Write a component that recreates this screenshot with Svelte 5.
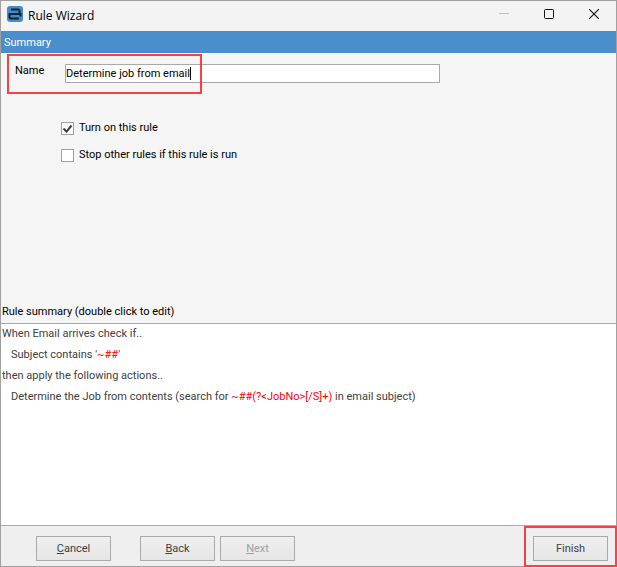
<script>
    let name = 'Determine job from email';
    let enabled = true;
    let stopOthers = false;

    const lines = [
        { parts: [{ text: 'When Email arrives check if..' }] },
        { indent: true, parts: [{ text: "Subject contains '" }, { text: '~##', value: true }, { text: "'" }] },
        { parts: [{ text: 'then apply the following actions..' }] },
        {
            indent: true,
            parts: [
                { text: 'Determine the Job from contents (search for ' },
                { text: '~##(?<JobNo>[/S]+)', value: true },
                { text: ' in email subject)' },
            ],
        },
    ];
</script>

<main class="window">
    <header class="titlebar">
        <svg class="logo" width="16" height="16" viewBox="0 0 16 16" aria-hidden="true">
            <rect width="16" height="16" rx="3" fill="#438bc9" />
            <path d="M4 3.5h7q1.5 0 1.5 1.5v3M1.5 8h13M2.5 8v3q0 1.5 1.5 1.5h8M13.5 8v2.5" fill="none" stroke="#14222c" stroke-width="2" />
        </svg>
        <h1>Rule Wizard</h1>
        <div class="controls">
            <button aria-label="Minimize" disabled>
                <svg width="10" height="10" viewBox="0 0 10 10"><path d="M0 4.5h10" stroke="#c0c0c0" /></svg>
            </button>
            <button aria-label="Maximize">
                <svg width="10" height="10" viewBox="0 0 10 10"><rect x=".5" y=".5" width="9" height="9" rx="1" fill="none" stroke="#111" /></svg>
            </button>
            <button aria-label="Close">
                <svg width="10" height="10" viewBox="0 0 10 10"><path d="M0 0l10 10M10 0L0 10" stroke="#111" stroke-width="1.1" /></svg>
            </button>
        </div>
    </header>

    <h2>Summary</h2>

    <section class="options">
        <div class="name-row">
            <label for="rule-name">Name</label>
            <div class="field">
                <input id="rule-name" type="text" bind:value={name} />
                <span class="caret"></span>
            </div>
            <div class="highlight name-highlight"></div>
        </div>
        <div class="checks">
            <label><input type="checkbox" bind:checked={enabled} />Turn on this rule</label>
            <label><input type="checkbox" bind:checked={stopOthers} />Stop other rules if this rule is run</label>
        </div>
        <h3>Rule summary (double click to edit)</h3>
    </section>

    <section class="summary">
        {#each lines as line}
            <p class:indent={line.indent}>{#each line.parts as part}<span class:value={part.value}>{part.text}</span>{/each}</p>
        {/each}
    </section>

    <footer>
        <button class="cancel"><span><u>C</u>ancel</span></button>
        <button><span><u>B</u>ack</span></button>
        <button disabled><span><u>N</u>ext</span></button>
        <div class="finish">
            <button>Finish</button>
            <div class="highlight finish-highlight"></div>
        </div>
    </footer>
</main>

<style>
    :global(body) {
        margin: 0;
    }

    .window {
        box-sizing: border-box;
        display: flex;
        flex-direction: column;
        min-height: 100vh;
        border: 1px solid #a0a0a0;
        background-color: #f5f5f5;
        color: #000;
        font: 11px/14px Tahoma, Roboto, sans-serif;
    }

    button, input {
        font: inherit;
        color: inherit;
    }

    h1, h2, h3, p {
        margin: 0;
        font-size: inherit;
        font-weight: normal;
    }

    .titlebar {
        display: flex;
        align-items: center;
        height: 30px;
        padding-left: 6px;
        background-color: #f3f3f3;
    }

    .titlebar h1 {
        margin-left: 5px;
        font: 12px/16px 'Segoe UI', 'Open Sans', sans-serif;
    }

    .logo {
        margin-bottom: 4px;
    }

    .controls {
        display: flex;
        align-self: stretch;
        margin-left: auto;
    }

    .controls button {
        display: flex;
        align-items: center;
        justify-content: center;
        width: 45px;
        padding: 0 0 4px;
        border: 0;
        background: none;
    }

    h2 {
        padding: 5px 3px 3px;
        background-color: #4b8ecc;
        color: #fff;
    }

    .options {
        display: flex;
        flex-direction: column;
        height: 270px;
        border-bottom: 1px solid #a9a9a9;
    }

    .name-row {
        position: relative;
        display: flex;
        padding: 11px 0 0 14px;
    }

    .name-row label {
        width: 50px;
    }

    .field {
        position: relative;
        flex: 0 1 375px;
    }

    .field input {
        box-sizing: border-box;
        display: block;
        width: 100%;
        height: 19px;
        padding: 0 0 1px;
        border: 1px solid #a9a9a9;
        background-color: #fff;
        outline: 0;
    }

    .caret {
        position: absolute;
        top: 3px;
        left: 125px;
        width: 1px;
        height: 13px;
        background-color: #000;
    }

    .highlight {
        position: absolute;
        box-sizing: border-box;
        border: 2px solid #f94144;
        pointer-events: none;
    }

    .name-highlight {
        top: 1px;
        left: 6px;
        width: 195px;
        height: 40px;
    }

    .checks {
        display: flex;
        flex-direction: column;
        align-items: flex-start;
        gap: 13px;
        padding: 38px 0 0 60px;
    }

    .checks label {
        display: flex;
        align-items: center;
        gap: 5px;
    }

    .checks input {
        box-sizing: border-box;
        appearance: none;
        width: 13px;
        height: 13px;
        margin: 0;
        border: 1px solid #a0a0a0;
        background-color: #fff;
    }

    .checks input:checked {
        background-image: url("data:image/svg+xml,%3Csvg xmlns='http://www.w3.org/2000/svg' viewBox='0 0 11 11'%3E%3Cpath d='M1.5 5.5l3 3.2L9.5 2.5' fill='none' stroke='%23404040' stroke-width='2'/%3E%3C/svg%3E");
    }

    h3 {
        margin-top: auto;
        padding: 0 1px 4px;
    }

    .summary {
        flex: 1;
        background-color: #fff;
        color: #404040;
    }

    .summary p {
        padding: 3px 1px 4px;
    }

    .summary .indent {
        padding-left: 10px;
    }

    .summary .value {
        color: #f00;
    }

    footer {
        display: flex;
        align-items: flex-start;
        gap: 5px;
        padding: 10px 8px 5px 35px;
        border-top: 1px solid #a9a9a9;
        background-color: #efefef;
        color: #404040;
    }

    footer button {
        width: 75px;
        height: 25px;
        padding: 0;
        border: 1px solid #a9a9a9;
        background: linear-gradient(#efefef, #e6e6e6);
    }

    footer button:disabled {
        color: #a0a0a0;
    }

    .cancel {
        margin-right: 24px;
    }

    .finish {
        position: relative;
        margin-left: auto;
    }

    .finish-highlight {
        top: -10px;
        left: -9px;
        width: 93px;
        height: 41px;
    }
</style>
